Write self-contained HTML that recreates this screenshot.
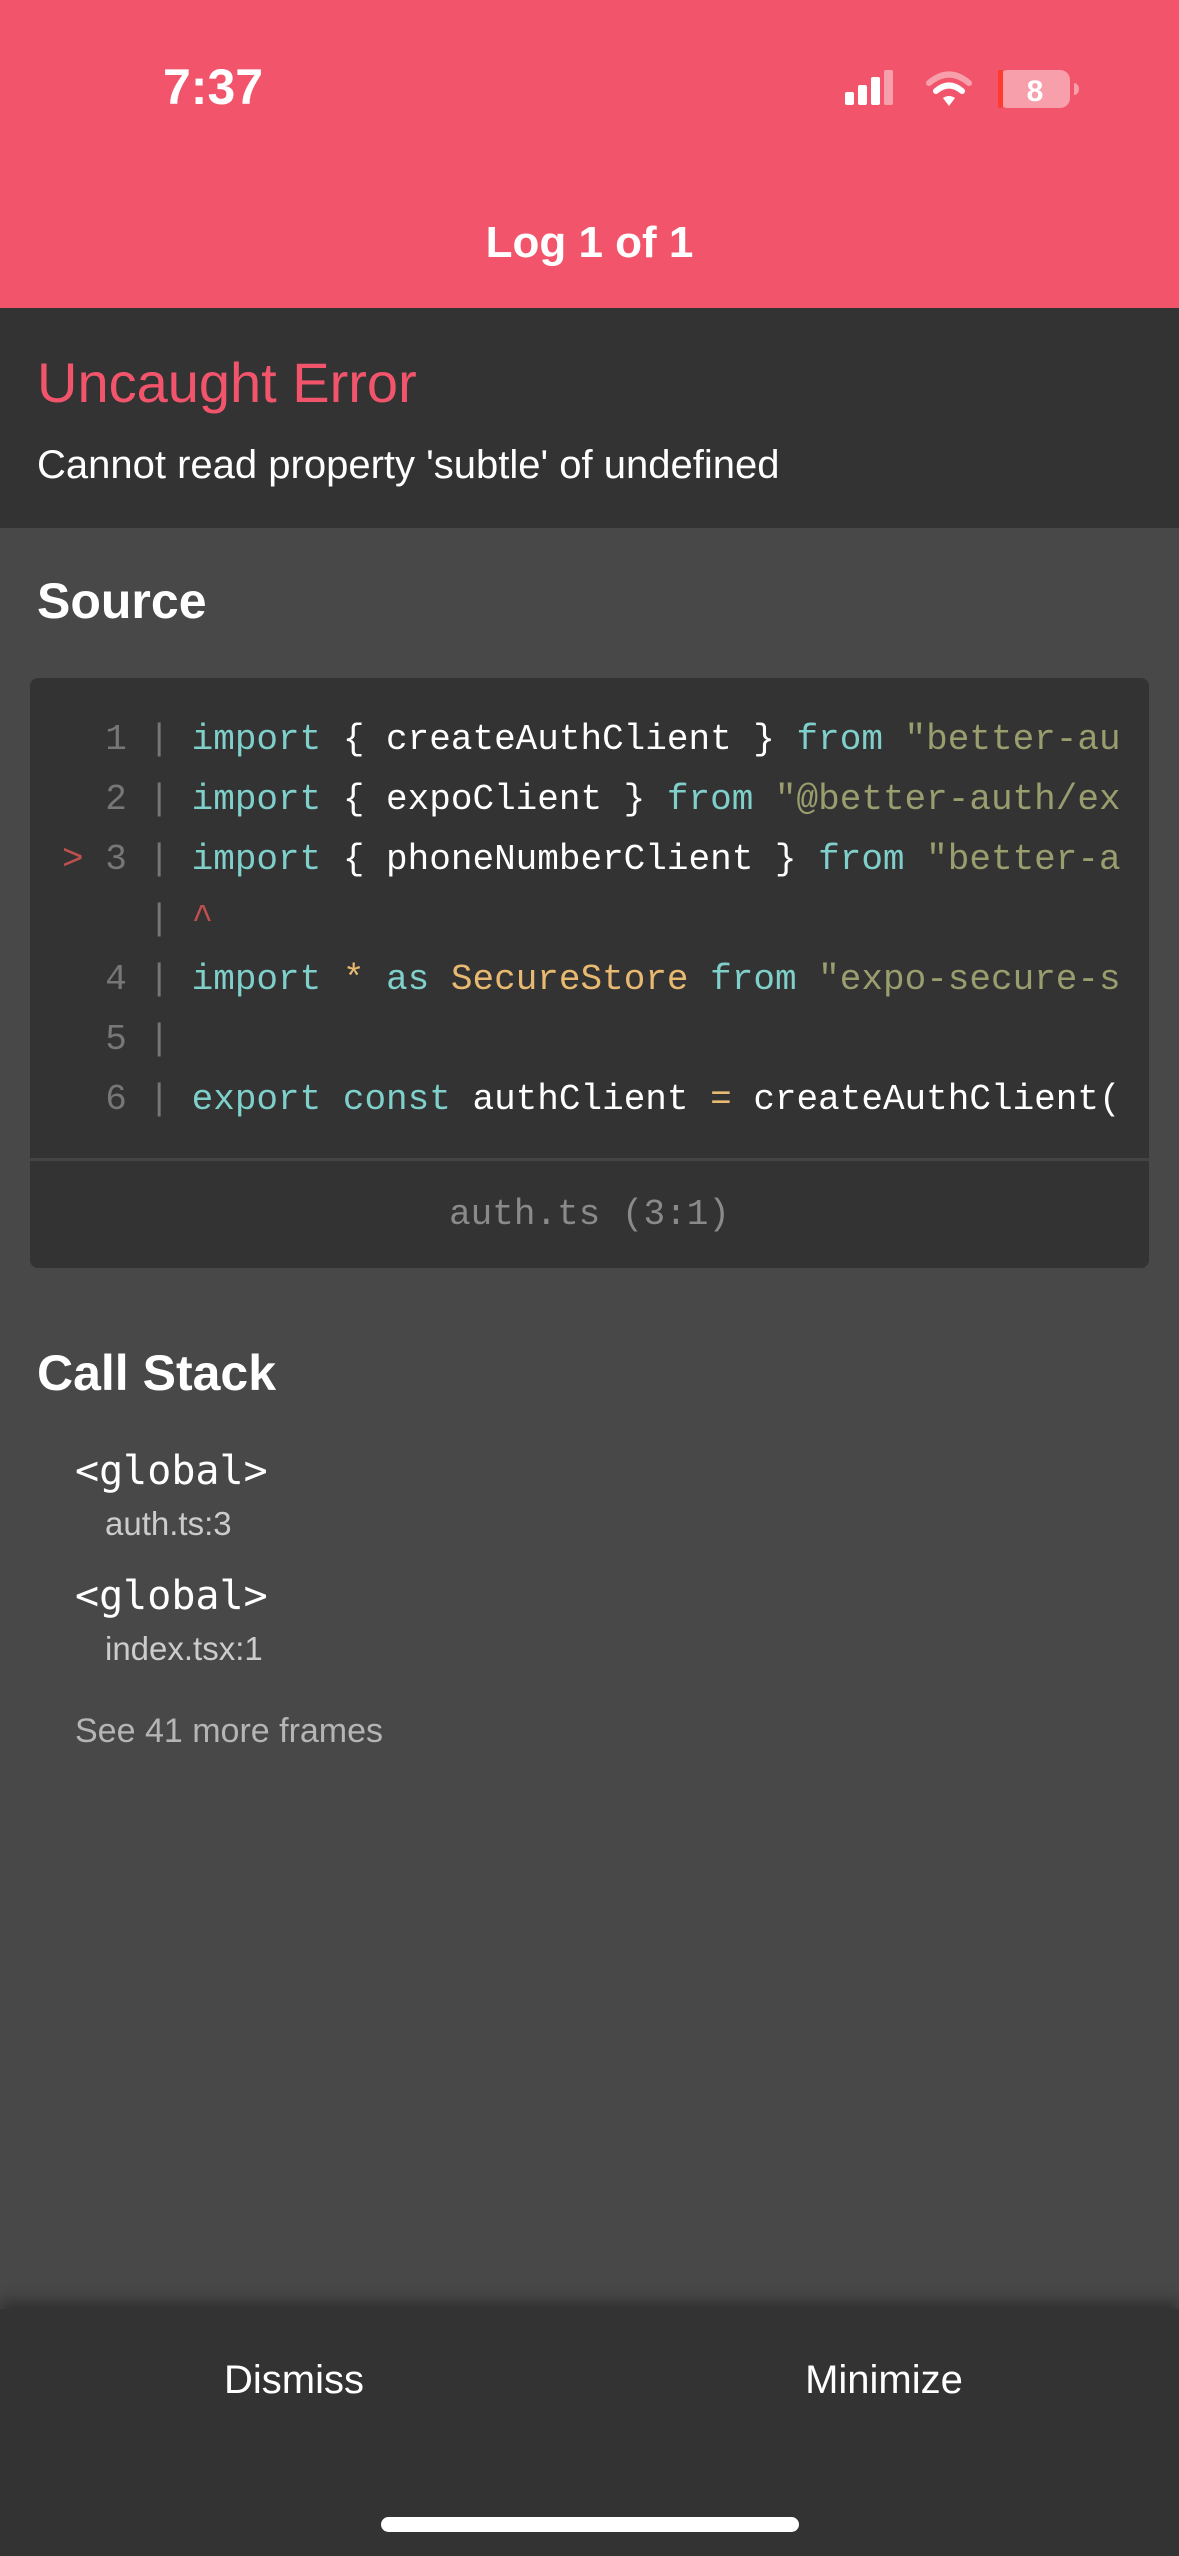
<!DOCTYPE html>
<html><head><meta charset="utf-8"><style>
*{margin:0;padding:0;box-sizing:border-box}
body{width:1179px;height:2556px;background:#484848;position:relative;overflow:hidden;font-family:"Liberation Sans",sans-serif;color:#fff}
.a{position:absolute;white-space:nowrap}
.m{font-family:"DejaVu Sans Mono","Liberation Mono",monospace}
.code{position:absolute;left:30px;top:678px;width:1119px;height:590px;background:#333;border-radius:8px;overflow:hidden}
.ln{position:absolute;font-family:"Liberation Mono",monospace;font-size:36px;line-height:60px;white-space:nowrap}
.k{color:#7fcfcb}.s{color:#9a9d6e}.y{color:#e8b970}.g{color:#777}
.n{display:inline-block;width:140px;text-align:right}
</style></head><body>
<div class="a" style="left:0;top:0;width:1179px;height:308px;background:#f2556b"></div>
<div class="a" style="left:163px;top:58px;font-size:50px;font-weight:bold">7:37</div>
<svg class="a" style="left:843px;top:68px" width="240" height="44" viewBox="0 0 240 44">
<rect x="2" y="24" width="9" height="13" rx="2" fill="#fff"/>
<rect x="15" y="17" width="9" height="20" rx="2" fill="#fff"/>
<rect x="28" y="9" width="9" height="28" rx="2" fill="#fff"/>
<rect x="41" y="2" width="9" height="35" rx="2" fill="#f7a0ab"/>
<path d="M86 15 Q106 -2 126 15" stroke="#f7a0ab" stroke-width="6" fill="none" stroke-linecap="round"/>
<path d="M93 23 Q106 12 119 23" stroke="#fff" stroke-width="6" fill="none" stroke-linecap="round"/>
<path d="M100 30 L106 38 L112 30 Q106 26 100 30Z" fill="#fff"/>
<rect x="155" y="2" width="72" height="38" rx="10" fill="#f7a0ab"/>
<rect x="155" y="2" width="5" height="38" rx="2" fill="#ff3b30"/>
<path d="M231 15 a5 6 0 0 1 0 12z" fill="#f7a0ab"/>
<text x="192" y="33" font-size="30" font-weight="bold" fill="#fff" text-anchor="middle" font-family="Liberation Sans">8</text>
</svg>
<div class="a" style="left:0;width:1179px;top:218px;text-align:center;font-size:44px;font-weight:bold">Log 1 of 1</div>
<div class="a" style="left:0;top:308px;width:1179px;height:220px;background:#333"></div>
<div class="a" style="left:37px;top:350px;font-size:56px;color:#f2556b">Uncaught Error</div>
<div class="a" style="left:37px;top:443px;font-size:40px">Cannot read property 'subtle' of undefined</div>
<div class="a" style="left:37px;top:572px;font-size:50px;font-weight:bold">Source</div>
<div class="code">
<div class="ln" style="top:32px;left:0">
<div><span class="g n">1 |</span> <span class="k">import</span> { createAuthClient } <span class="k">from</span> <span class="s">"better-au</span></div>
<div><span class="g n">2 |</span> <span class="k">import</span> { expoClient } <span class="k">from</span> <span class="s">"@better-auth/ex</span></div>
<div><span class="n"><span style="color:#c0504d">&gt;</span> <span class="g">3 |</span></span> <span class="k">import</span> { phoneNumberClient } <span class="k">from</span> <span class="s">"better-a</span></div>
<div><span class="g n">|</span> <span style="color:#c0504d">^</span></div>
<div><span class="g n">4 |</span> <span class="k">import</span> <span class="y">*</span> <span class="k">as</span> <span class="y">SecureStore</span> <span class="k">from</span> <span class="s">"expo-secure-s</span></div>
<div><span class="g n">5 |</span></div>
<div><span class="g n">6 |</span> <span class="k">export const</span> authClient <span class="y">=</span> createAuthClient(</div>
</div>
<div style="position:absolute;left:0;top:480px;width:100%;height:3px;background:#444"></div>
<div class="ln g" style="top:507px;width:100%;text-align:center;color:#8a8a8a">auth.ts (3:1)</div>
</div>
<div class="a" style="left:37px;top:1344px;font-size:50px;font-weight:bold">Call Stack</div>
<div class="a m" style="left:75px;top:1448px;font-size:40px">&lt;global&gt;</div>
<div class="a" style="left:105px;top:1505px;font-size:33px;color:#ccc">auth.ts:3</div>
<div class="a m" style="left:75px;top:1573px;font-size:40px">&lt;global&gt;</div>
<div class="a" style="left:105px;top:1630px;font-size:33px;color:#ccc">index.tsx:1</div>
<div class="a" style="left:75px;top:1712px;font-size:34px;color:#b5b5b5">See 41 more frames</div>
<div class="a" style="left:0;top:2309px;width:1179px;height:247px;background:#333;box-shadow:0 -8px 14px rgba(0,0,0,0.35)"></div>
<div class="a" style="left:0;width:588px;top:2358px;text-align:center;font-size:40px">Dismiss</div>
<div class="a" style="left:590px;width:588px;top:2358px;text-align:center;font-size:40px">Minimize</div>
<div class="a" style="left:381px;top:2517px;width:418px;height:15px;border-radius:8px;background:#fff"></div>
</body></html>
